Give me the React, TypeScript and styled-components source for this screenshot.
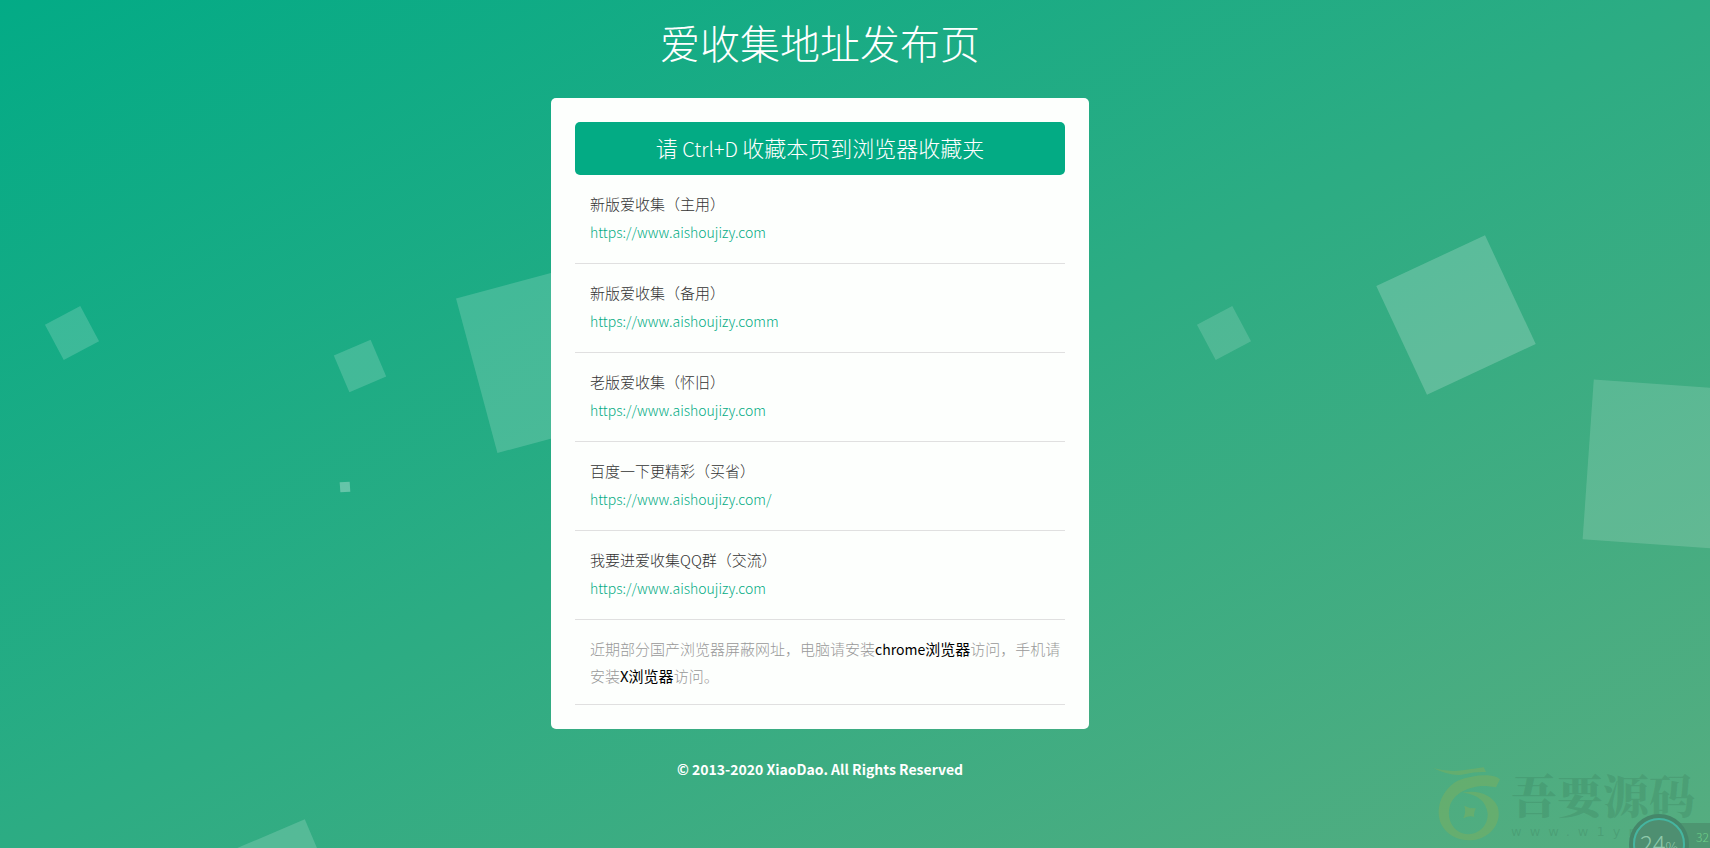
import React from 'react';
import styled, { createGlobalStyle } from 'styled-components';

const GlobalStyle = createGlobalStyle`
  * { box-sizing: border-box; }
  body {
    margin: 0;
    color: #333;
    background: #03ab86;
    font: 300 15px/27px "Noto Sans CJK SC", sans-serif;
  }
`;

const Page = styled.div`
  position: relative;
  display: flex;
  flex-direction: column;
  align-items: center;
  min-height: 100vh;
  padding-right: 70px;
  overflow: hidden;
  background: linear-gradient(to bottom right, #03ab86, #56ad80);
`;

const Backdrop = styled.div`
  position: absolute;
  inset: 0;
  overflow: hidden;
`;

const Square = styled.span<{ $x: number; $y: number; $size: number; $turn: number; $alpha: number }>`
  position: absolute;
  left: ${(p) => p.$x - p.$size / 2}px;
  top: ${(p) => p.$y - p.$size / 2}px;
  width: ${(p) => p.$size}px;
  height: ${(p) => p.$size}px;
  background: rgba(255, 255, 255, ${(p) => p.$alpha});
  transform: rotate(${(p) => p.$turn}deg);
`;

const Title = styled.h1`
  position: relative;
  margin: 0;
  padding: 12px 0 26px;
  color: #fff;
  font-size: 40px;
  font-weight: 300;
  line-height: 60px;
`;

const Card = styled.main`
  position: relative;
  width: 100%;
  max-width: 538px;
  padding: 24px;
  border-radius: 5px;
  background: #fdfffd;
`;

const Banner = styled.h2`
  margin: 0;
  padding: 9px 10px 11px;
  border-radius: 5px;
  background: #03ab84;
  color: #fff;
  font-size: 22px;
  font-weight: 300;
  line-height: 33px;
  text-align: center;
`;

const Keys = styled.kbd`
  font-family: inherit;
  font-size: 20px;
  line-height: 1;
`;

const List = styled.ul`
  margin: 0;
  padding: 0;
  list-style: none;
`;

const Row = styled.li`
  display: flex;
  flex-direction: column;
  align-items: flex-start;
  gap: 2px;
  padding: 15px 15px 17px;
  border-bottom: 1px solid #e0e0e0;
`;

const SiteLink = styled.a`
  color: #03ab84;
  font-size: 14px;
  text-decoration: none;
`;

const Note = styled.p`
  margin: 0;
  padding: 15px 0 15px 15px;
  border-bottom: 1px solid #e0e0e0;
  color: #999;
`;

const Strong = styled.strong`
  color: #000;
  font-weight: 400;
`;

const Latin = styled.span`
  font-size: 14px;
  line-height: 1;
`;

const Footer = styled.footer`
  position: relative;
  padding: 27px 0;
  color: #fff;
  font-size: 14px;
  font-weight: 700;
`;

const Watermark = styled.div`
  position: absolute;
  right: 15px;
  bottom: 0;
  display: flex;
  gap: 8px;
  height: 84px;
  color: rgba(50, 110, 80, 0.22);
`;

const Emblem = styled.svg`
  width: 70px;
  height: 80px;
  fill: rgba(150, 178, 75, 0.32);
`;

const WatermarkText = styled.div`
  display: flex;
  flex-direction: column;
  width: 184px;
  font-family: "Noto Serif CJK SC", "Noto Sans CJK SC", serif;
  font-size: 46px;
  font-weight: 900;
  line-height: 58px;
`;

const WatermarkUrl = styled.span`
  font-family: "DejaVu Sans", sans-serif;
  font-size: 13px;
  font-weight: 400;
  line-height: 20px;
  letter-spacing: 8px;
  white-space: nowrap;
`;

const Monitor = styled.div`
  position: absolute;
  right: 0;
  bottom: 0;
  display: flex;
  height: 34px;
  overflow: hidden;
`;

const Gauge = styled.div`
  z-index: 1;
  width: 60px;
  height: 60px;
  border: 4px solid #45876a;
  border-radius: 50%;
  background: #4e8f71;
`;

const Dial = styled.div`
  height: 52px;
  padding-top: 6px;
  border: 2px solid #45b5a0;
  border-radius: 50%;
  color: #8fc9ab;
  font-size: 24px;
  line-height: 34px;
  text-align: center;
`;

const Percent = styled.small`
  font-size: 14px;
  line-height: 1;
`;

const Speed = styled.div`
  width: 30px;
  margin: 9px 0 0 -9px;
  padding-left: 16px;
  background: #4d9671;
  color: #6fd08a;
  font-size: 12px;
`;

const squares = [
  { x: 72, y: 333, size: 40, turn: -28, alpha: 0.17 },
  { x: 360, y: 366, size: 40, turn: -23, alpha: 0.17 },
  { x: 554, y: 355, size: 160, turn: -15, alpha: 0.17 },
  { x: 345, y: 487, size: 10, turn: -4, alpha: 0.3 },
  { x: 1224, y: 333, size: 40, turn: -28, alpha: 0.15 },
  { x: 1456, y: 315, size: 120, turn: -25, alpha: 0.2 },
  { x: 1668, y: 465, size: 160, turn: 4, alpha: 0.15 },
  { x: 273, y: 898, size: 120, turn: -23, alpha: 0.17 },
];

const sites = [
  { name: '新版爱收集（主用）', url: 'https://www.aishoujizy.com' },
  { name: '新版爱收集（备用）', url: 'https://www.aishoujizy.comm' },
  { name: '老版爱收集（怀旧）', url: 'https://www.aishoujizy.com' },
  { name: '百度一下更精彩（买省）', url: 'https://www.aishoujizy.com/' },
  { name: '我要进爱收集QQ群（交流）', url: 'https://www.aishoujizy.com' },
];

export default function App() {
  return (
    <Page>
      <GlobalStyle />
      <Backdrop aria-hidden="true">
        {squares.map((s, i) => (
          <Square key={i} $x={s.x} $y={s.y} $size={s.size} $turn={s.turn} $alpha={s.alpha} />
        ))}
      </Backdrop>
      <Title>爱收集地址发布页</Title>
      <Card>
        <Banner>
          请<Keys> Ctrl+D </Keys>收藏本页到浏览器收藏夹
        </Banner>
        <List>
          {sites.map((s) => (
            <Row key={s.name}>
              <span>{s.name}</span>
              <SiteLink href={s.url}>{s.url}</SiteLink>
            </Row>
          ))}
        </List>
        <Note>
          近期部分国产浏览器屏蔽网址，电脑请安装
          <Strong>
            <Latin>chrome</Latin>浏览器
          </Strong>
          访问，手机请安装<Strong>X浏览器</Strong>访问。
        </Note>
      </Card>
      <Footer>© 2013-2020 XiaoDao. All Rights Reserved</Footer>
      <Watermark>
        <Emblem viewBox="6 12 210 240" aria-hidden="true">
          <path d="M6 24Q50 37 95 31T158 22L165 36Q135 34 100 43T6 24Z" />
          <path d="M207 58C190 40 130 42 80 62C30 90 10 150 32 195C52 232 100 250 145 236C190 220 212 180 200 140C185 105 140 88 95 98C140 102 166 125 170 160C172 195 146 222 112 223C70 220 46 182 56 140C66 100 115 77 165 78L195 82Z" />
          <path d="M100 137Q115 146 135 145Q127 157 130 171Q115 165 97 175Q106 157 100 137Z" />
        </Emblem>
        <WatermarkText>
          吾要源码
          <WatermarkUrl>www.w1ym.com</WatermarkUrl>
        </WatermarkText>
      </Watermark>
      <Monitor>
        <Gauge>
          <Dial>
            24<Percent>%</Percent>
          </Dial>
        </Gauge>
        <Speed>32</Speed>
      </Monitor>
    </Page>
  );
}
